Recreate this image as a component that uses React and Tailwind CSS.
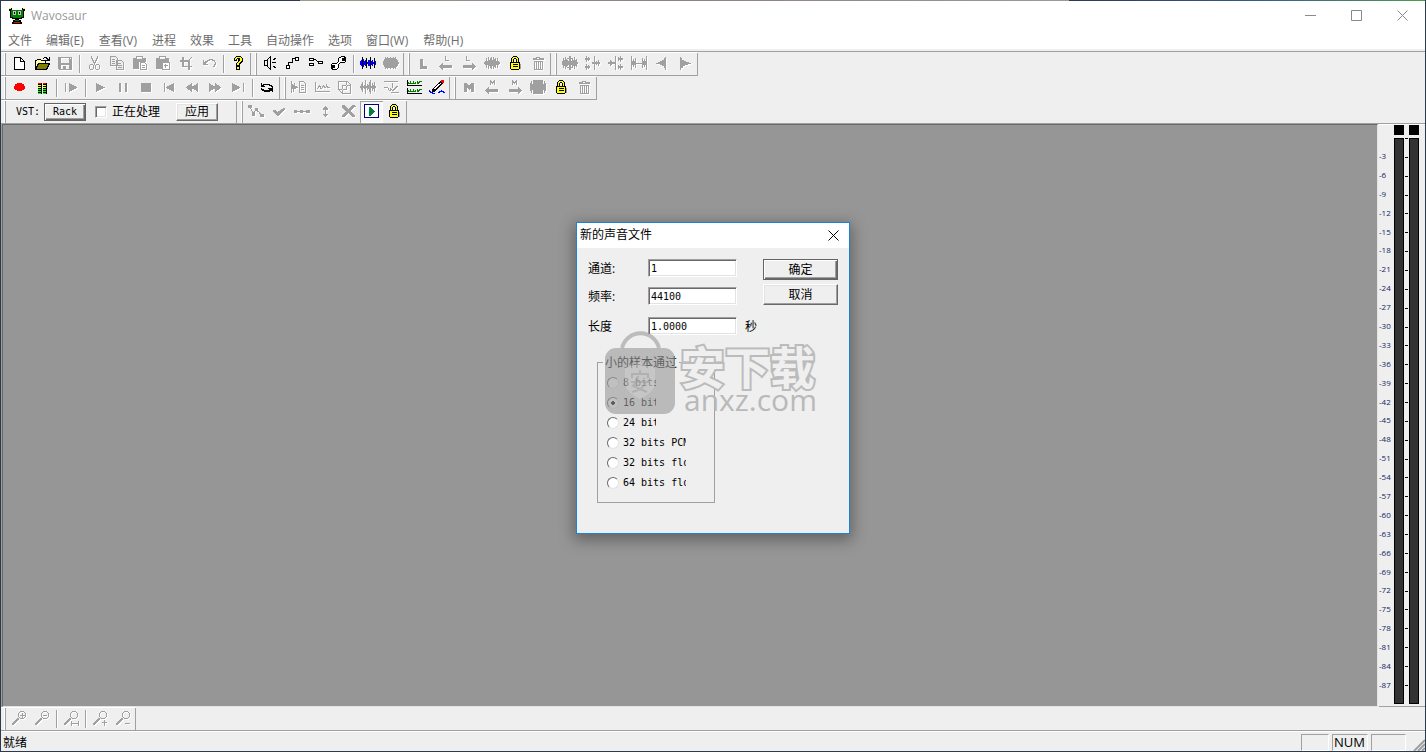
import { useState } from "react";
import clsx from "clsx";

const MENUS = ["文件", "编辑(E)", "查看(V)", "进程", "效果", "工具", "自动操作", "选项", "窗口(W)", "帮助(H)"];

const LEVELS = Array.from({ length: 29 }, (_, i) => -3 * (i + 1));

// one column per pixel, mirrored around the middle of the 16px box
const bars = (heights, from = 0, mid = 8) =>
  heights.map((h, i) => `M${from + i} ${mid - h}h1v${h * 2}h-1z`).join("");

const WAVE = [1, 2, 5, 2, 6, 3, 5, 6, 3, 6, 4, 5, 2, 5, 2, 1];
const FULL_WAVE = [2, 4, 6, 5, 6, 5, 5, 6, 5, 5, 6, 5, 6, 4, 3, 1];

const LOCK = (
  <>
    <path d="M6 1h4v1h1v1h1v4h1v7h-1v1H4v-1H3V7h1V3h1V2h1z" fill="#000" />
    <path d="M6 2h4v1h1v4h-1V4H9V3H7v1H6v3H5V3h1z" fill="#ff0" />
    <path d="M7 4h2v3H7z" fill="#efefef" />
    <path d="M4 8h8v6H4zM6 9v1h5V9zM6 11v1h5v-1z" fill="#ff0" fillRule="evenodd" />
    <path d="M13 9h1v5h-1z" fill="#a0a0a0" />
  </>
);

const TRASH = (
  <path
    d="M6 2h4v1h4v2H3V3h3zM7 3v1h2V3zM4 6h9v9H4zM5 7v7h1V7zM7 7v7h1V7zM9 7v7h1V7zM11 7v7h1V7z"
    fillRule="evenodd"
  />
);

const LENS = (
  <>
    <path d="M9.500 1.500h3l2 2v3l-2 2h-3l-2-2v-3z" fill="none" stroke="currentColor" />
    <path d="M6 8h2v2H7v1H6v1H5v1H4v1H3v1H1v-2h1v-1h1v-1h1v-1h1V9h1z" />
  </>
);

const CLIPBOARD = "M1 3h3V1h7v2h3v4H7v7H1zM5 2v2h5V2z";

const ICONS = {
  new: (
    <>
      <path d="M3.500 2.500h6l4 4v8h-10z" fill="#fff" stroke="#000" />
      <path d="M9.500 2v4.500H14" fill="none" stroke="#000" />
    </>
  ),
  open: (
    <>
      <path d="M1.500 12.5v-7h1l1-1h3l1 1h4v3" fill="#ffff9c" stroke="#000" />
      <path d="M1.500 14.500l3-6h11l-3 6z" fill="#808000" stroke="#000" />
      <path d="M9 3h1V2h3v1h1v1h1V2h1v4h-4V5h1V4h-1V3h-2v1H9z" fill="#000" />
    </>
  ),
  save: <path d="M1 2h14v13H2v-1H1zM4 3v5h8V3zM13 3v1h1V3zM4 10v4h2v-3h3v3h3v-4z" fillRule="evenodd" />,
  cut: (
    <>
      <path d="M5 1h1v2h1v2h1v2h1V5h1V3h1V1h1v3h-1v2h-1v2H9v2H8V8H7V6H6V4H5z" />
      <path d="M4.500 9.500h2l1 1v3l-1 1h-2l-1-1v-3zM10.500 9.500h2l1 1v3l-1 1h-2l-1-1v-3z" fill="none" stroke="currentColor" />
    </>
  ),
  copy: (
    <>
      <path d="M1.500 1.500h5l2 2v7h-7zM7.500 5.500h5l2 2v7h-7z" fill="#efefef" stroke="currentColor" />
      <path d="M3 4h3v1H3zM3 6h3v1H3zM3 8h3v1H3zM9 8h3v1H9zM9 10h4v1H9zM9 12h4v1H9z" />
    </>
  ),
  paste: (
    <>
      <path d={CLIPBOARD} fillRule="evenodd" />
      <path d="M8.500 7.500h4l2 2v5h-6z" fill="#fff" stroke="currentColor" />
      <path d="M10 10h3v1h-3zM10 12h3v1h-3z" />
    </>
  ),
  pasteNew: (
    <>
      <path d={CLIPBOARD} fillRule="evenodd" />
      <path d="M7.500 7.500h7v7h-7z" fill="#fff" stroke="currentColor" />
      <path d="M9 10h1V9h1v1h2v1h-2v2h-1v-2H9z" />
    </>
  ),
  crop: (
    <path
      d="M4 2h2v3h5V4h1V3h1V2h1v1h-1v1h-1v7h2v1h-2v3h-2v-3H4V7H2V5h2zM6 7v4h1v-1h1V9h1V8h1V7zM10 8H9v1H8v1H7v1h3z"
      fillRule="evenodd"
    />
  ),
  undo: <path d="M2 5h1v2h1V6h2V5h2V4h4v1h2v2h1v3h-1v2h-2v-1h1v-2h1V7h-1V6h-2V5H9v1H7v1H6v1H5v1h2v1H2z" />,
  help: (
    <>
      <path d="M4 3h1V2h1V1h5v1h1v1h1v4h-1v1h-1v1h-1v2H6V8h1V7h1V4H7v2H4zM6 11h4v4H6z" fill="#000" />
      <path d="M5 3h1V2h5v1h1v3h-1v1h-1v1H9v2H7V8h1V7h1V6h1V3H7v1H6v1H5zM7 12h2v2H7z" fill="#ff0" />
    </>
  ),
  speaker: (
    <>
      <path d="M2.500 5.500h2l4-4v13l-4-4h-2zM5.500 5v6" fill="none" stroke="currentColor" />
      <path d="M10 7h4v1h-4zM11 4h1V3h2v1h-1v1h-2zM11 11h2v1h1v1h-2v-1h-1z" />
    </>
  ),
  route: (
    <>
      <path d="M1.500 10.500h3v3h-3zM10.500 2.500h3v3h-3z" fill="#fff" stroke="currentColor" />
      <path d="M3 7h4V3h3v1H8v4H4v2H3z" />
    </>
  ),
  chain: (
    <>
      <path d="M1.500 3.500h4v2h-4zM1.500 8.500h4v2h-4zM10.500 6.500h4v2h-4z" fill="#fff" stroke="currentColor" />
      <path d="M6 4h2v1h1v1h1v1H9V6H8V5H6z" />
    </>
  ),
  wrench: (
    <>
      <path d="M10 1h4v1h1v5h-1v1H9v1H8v4H7v1H6v1H1v-1H0V9h1V8h5V7h1V3h1V2h2z" fill="#000" />
      <path d="M10 2h3v1h-2v3h3v1H9v1H8v1H7v4H6v1H2v-1h2v-3H1V9h5V8h1V7h1V3h2z" fill="#fff" />
    </>
  ),
  blueWave: (
    <>
      <path d={bars([2, 3, 1, 4, 2, 3, 4, 1, 3, 3, 4, 2, 3, 1, 3, 2])} fill="#00f" />
      <path d="M2 2h1v12H2zM6 3h1v10H6zM10 2h1v12h-1zM14 3h1v10h-1z" fill="#000" />
    </>
  ),
  fullWave: <path d={bars(FULL_WAVE)} />,
  letterL: <path d="M5 4h3v7h4v3H5z" />,
  prevL: <path d="M7 1h1v4h3v1H7zM5 8v2h9v3H5v2H4v-1H3v-1H2v-1H1v-1h1v-1h1V9h1V8z" />,
  nextL: <path d="M5 1h1v4h3v1H5zM11 8v2H2v3h9v2h1v-1h1v-1h1v-1h1v-1h-1v-1h-1V9h-1V8z" />,
  wave: <path d={bars(WAVE)} />,
  lock: LOCK,
  trash: TRASH,
  waveIn: (
    <>
      <path d={bars([2, 5, 3, 6, 4, 3, 2, 7, 7, 2, 4, 3, 6, 3, 4, 1])} />
      <path d="M5 3h6v1H5zM5 12h6v1H5z" />
    </>
  ),
  split: <path d={bars([1, 3, 1, 2, 1], 0, 4) + bars([1, 3, 1, 2, 1], 0, 12) + bars([1, 1, 7, 1, 2, 1, 3, 1], 7)} />,
  merge: <path d={bars([1, 1, 3, 2, 1, 1, 1, 7], 0) + bars([2, 1, 3, 1, 1], 10, 4) + bars([2, 1, 3, 1, 1], 10, 12)} />,
  gap: <path d={bars([7, 2, 4, 2, 5]) + bars([5, 2, 4, 2, 7], 11) + "M5 8h6v1H5z"} />,
  fadeIn: <path d="M2 8h2V7h2V6h2V5h2V3h1V2h1v13h-1v-2h-1v-2H8v-1H6V9H2z" />,
  fadeOut: <path d="M3 2h1v1h1v2h2v1h2v1h3v1h2v1h-3v1H8v1H6v2H4v2H3z" />,
  record: <path d="M6 4h5v1h2v2h1v3h-1v1h-2v1H6v-1H4v-1H3V7h1V5h2z" fill="#f00" />,
  meter: (
    <>
      <path d="M4 4h4v11H4zM9 4h4v11H9z" fill="#000" />
      <path d="M4 4h3v1H4zM9 4h3v1H9z" fill="#f00" />
      <path d="M4 6h3v1H4zM9 6h3v1H9zM4 8h3v1H4zM9 8h3v1H9z" fill="#ff0" />
      <path d="M4 10h3v1H4zM9 10h3v1H9zM4 12h3v1H4zM9 12h3v1H9zM4 14h3v1H4zM9 14h3v1H9z" fill="#0f0" />
    </>
  ),
  playFrom: <path d="M2 4h1v9H2zM6 4h1v1h2v1h2v1h2v1h1v1h-1v1h-2v1H9v1H7v1H6z" />,
  play: <path d="M4 4h1v1h2v1h2v1h2v1h2v1h-2v1H9v1H7v1H5v1H4z" />,
  pause: <path d="M4 4h2v9H4zM10 4h2v9h-2z" />,
  stop: <path d="M3 4h10v9H3z" />,
  start: <path d="M3 4h1v9H3zM13 4v9h-1v-1h-2v-1H8v-1H6V9H5V8h1V7h2V6h2V5h2V4z" />,
  rewind: <path d="M8 4v9H7v-1H6v-1H4v-1H3V9H2V8h1V7h1V6h2V5h1V4zM14 4v9h-1v-1h-1v-1h-2v-1H8V7h2V6h2V5h1V4z" />,
  forward: <path d="M2 4h1v1h1v1h2v1h2V4h1v1h1v1h2v1h1v1h1v1h-1v1h-1v1h-2v1H9v1H8v-3H6v1H4v1H3v1H2z" />,
  end: <path d="M2 4h1v1h2v1h2v1h2v1h1v1H9v1H7v1H5v1H3v1H2zM13 4h1v9h-1z" />,
  loop: <path d="M4 5h7v1h2v1h1v2h-1V8h-1V7h-2V6H5v1h1v1H2V4h1v2h1zM2 9h1v1h2v1h5v-1H9V9h5v4h-1v-1h-2v1H5v-1H3v-1H2z" />,
  insertFile: (
    <>
      <path d="M0 2h1v3h1v1h1V4h1v3h2v1h1v1H5v1H3v3H2v-3H1v4H0z" />
      <path d="M8.500 2.500h4l2 2v9h-6z" fill="none" stroke="currentColor" />
      <path d="M10 6h3v1h-3zM10 8h3v1h-3zM10 10h3v1h-3z" />
    </>
  ),
  graph: <path d="M1 3h1v9h14v1H1zM3 9h1V7h1V6h1v1h1v2h1V7h1V6h1v1h1v1h1V5h1v2h1v1h2v1h-3V8h-1v1h-2V8H9v1H8v1H6V8H5v1H4v1H3z" />,
  cube: (
    <>
      <path d="M1 2h9v9H1zM2 3v7h7V3zM5 6h9v9H5zM6 7v7h7V7z" fillRule="evenodd" />
      <path d="M10 2h1v1h1v1h1v1h1v1h-1V5h-1V4h-1V3h-1zM1 10h1v1h1v1h1v1h1v1H4v-1H3v-1H2v-1H1z" />
    </>
  ),
  slices: <path d={bars([1, 3, 5, 1, 2, 7, 1, 3, 2, 5, 7, 1, 4, 2, 5, 1])} />,
  threshold: <path d="M1 2h14v1H1zM8 13h8v1H8zM1 8h4v1h1v2h1V9h1v1h1v1h1v-1h1V9h1V8h1V7h2v1h-1v1h-1v1h-1v1h-1v1H9v-1H8v1H6v-1H5V9H1zM9 4h1v5H9z" />,
  stereo: (
    <>
      <path d="M1 1h1v6H1zM1 6h15v1H1zM1 9h1v6H1zM1 14h15v1H1z" fill="#000" />
      <path
        d="M2 3h1v2H2zM3 4h1V2h1v3H3zM5 4h2v1H5zM7 2h1v3H7zM8 4h1V3h1v2H8zM11 2h1v3h-1zM12 3h1v2h-1zM13 2h3v1h-2v1h-1zM2 11h1v2H2zM3 12h1v-2h1v3H3zM5 12h2v1H5zM7 10h1v3H7zM8 12h1v-1h1v2H8zM11 10h1v3h-1zM12 11h1v2h-1zM13 10h3v1h-2v1h-1z"
        fill="#008000"
      />
    </>
  ),
  pencil: (
    <>
      <path d="M0 11h1v1h1v1h2v1h2v1H3v-1H1v-1H0zM9 13h1v-1h2v-1h1v1h2v1h1v1h-2v-1h-3v1H9z" fill="#00f" />
      <path d="M12 1h3v3h-1v1h-1v1h-1v1h-1v1h-1v1H9v1H8v1H7v1H6v1H3v-3h1V9h1V8h1V7h1V6h1V5h1V4h1V3h1V2h1z" fill="#000" />
      <path d="M11 4h1v1h-1v1h-1v1H9v1H8v1H7v1H5V9h1V8h1V7h1V6h1V5h2z" fill="#fff" />
      <path d="M12 1h3v3h-2V3h-1z" fill="#f00" />
    </>
  ),
  letterM: <path d="M3 4h3l2 3 2-3h3v9h-3V9l-2 2-2-2v4H3z" />,
  prevM: <path d="M6 1h1v1h1v1h1V2h1V1h1v5h-1V4H9v1H8V4H7v2H6zM5 8v2h9v3H5v2H4v-1H3v-1H2v-1H1v-1h1v-1h1V9h1V8z" />,
  nextM: <path d="M5 1h1v1h1v1h1V2h1V1h1v5H9V4H8v1H7V4H6v2H5zM11 8v2H2v3h9v2h1v-1h1v-1h1v-1h1v-1h-1v-1h-1V9h-1V8z" />,
  block: <path d={bars([4, 6, 3, 7, 7, 7, 7, 7, 7, 7, 7, 7, 7, 3, 6, 4])} />,
  nodes: (
    <>
      <path d="M2 3l3 8 3-4 3 2 3 4" fill="none" stroke="currentColor" />
      <path d="M0 2h4v3H0zM4 10h3v3H4zM7 5h3v3H7zM12 11h4v3h-4z" />
    </>
  ),
  check: <path d="M2 7h3v1h1v1h1v-1h2V7h1V6h2V5h2v2h-1v1h-1v1h-1v1h-1v1H9v1H8v1H6v-1H5v-1H4v-1H3V9H2z" />,
  line: <path d="M0 7h3v1h3V7h3v1h3V7h4v3h-4V9H9v1H6V9H3v1H0z" />,
  vertical: <path d="M8 3h1v1h1v1h1v2H9v4h2v1h-1v1H9v1H8v-1H7v-1H6v-1h2V7H6V5h1V4h1z" />,
  cross: (
    <path d="M2 2h3v1h1v1h1v1h1v1h1V5h1V4h1V3h1V2h3v1h1v1h-2v1h-1v1h-1v1h-1v2h1v1h1v1h1v1h1v2h-3v-1h-1v-1h-1v-1H9v-1H8v1H7v1H6v1H5v1H2v-2h1v-1h1v-1h1v-1h1V8H5V7H4V6H3V5H2z" />
  ),
  autoplay: (
    <>
      <path d="M1 1h15v14H1z" fill="#000080" />
      <path d="M2 2h13v12H2z" fill="#fff" />
      <path d="M6 4h2v1h1v1h1v1h1v1h1v1h-1v1h-1v1H9v1H8v1H6z" fill="#008040" />
    </>
  ),
  zoomIn: <>{LENS}<path d="M11 3h1v2h2v1h-2v2h-1V6H9V5h2z" /></>,
  zoomOut: <>{LENS}<path d="M9 5h4v1H9z" /></>,
  zoomFit: <>{LENS}<path d="M8 11h1v2h6v-2h1v5h-1v-2H9v2H8z" /></>,
  zoomInV: <>{LENS}<path d="M12 10h1v2h2v1h-2v3h-1v-3h-2v-1h2z" /></>,
  zoomOutV: <>{LENS}<path d="M10 13h5v1h-5z" /></>,
};

const COLOURED = ["new", "open", "help", "speaker", "route", "chain", "wrench", "blueWave", "lock", "record", "meter", "loop", "stereo", "pencil", "autoplay"];

const ROW_ONE = [
  ["new", "open", "save", "|", "cut", "copy", "paste", "pasteNew", "crop", "undo", "|", "help"],
  ["speaker", "route", "chain", "wrench", "|", "blueWave", "fullWave"],
  ["letterL", "prevL", "nextL", "wave", "lock", "trash"],
  ["waveIn", "split", "merge", "gap", "fadeIn", "fadeOut"],
];

const ROW_TWO = [
  ["record", "meter", "|", "playFrom", "|", "play", "pause", "stop", "start", "rewind", "forward", "end", "|", "loop"],
  ["insertFile", "graph", "cube", "slices", "threshold", "stereo", "pencil"],
  ["letterM", "prevM", "nextM", "block", "lock", "trash"],
];

const ENVELOPE = ["nodes", "check", "line", "vertical", "cross", "autoplay", "lock"];
const ZOOM = ["zoomIn", "zoomOut", "|", "zoomFit", "|", "zoomInV", "zoomOutV"];

const RAISED =
  "border border-t-white border-l-white border-r-[#696969] border-b-[#696969] bg-[#efefef] shadow-[inset_-1px_-1px_0_#a0a0a0,inset_1px_1px_0_#e3e3e3]";
const DEFAULT_RAISED =
  "border border-[#646464] bg-[#efefef] shadow-[inset_1px_1px_0_#fff,inset_-1px_-1px_0_#696969,inset_-2px_-2px_0_#a0a0a0]";
const SUNKEN =
  "border border-t-[#a0a0a0] border-l-[#a0a0a0] border-r-white border-b-white bg-white shadow-[inset_1px_1px_0_#696969,inset_-1px_-1px_0_#e3e3e3]";
const PANE = "h-[17px] border border-t-[#a0a0a0] border-r-white border-b-white border-l-[#a0a0a0]";
const MONO = "font-['DejaVu_Sans_Mono',monospace] text-[10px]";

function ToolButton({ name }) {
  const coloured = COLOURED.includes(name);
  return (
    <button
      type="button"
      aria-label={name}
      className={clsx(
        "flex h-[22px] w-[23px] pt-0.5 pl-[3px]",
        coloured ? "text-black" : "text-[#a0a0a0] drop-shadow-[1px_1px_0_#fff]",
        name === "autoplay" && "bg-[#f7f7f7] shadow-[inset_1px_1px_0_#a0a0a0,inset_-1px_-1px_0_#fff]"
      )}
    >
      <svg viewBox="0 0 16 16" className="size-4 shrink-0" fill="currentColor" shapeRendering="crispEdges">
        {ICONS[name]}
      </svg>
    </button>
  );
}

function Band({ items, children }) {
  return (
    <div className="group flex h-6 border-t border-b border-t-white border-b-[#a0a0a0]">
      <div className="flex w-2 justify-end pr-0.5 group-first:w-[7px]">
        <div className="w-0.5 border-r border-l border-r-[#a0a0a0] border-l-white" />
      </div>
      {items?.map((name, i) =>
        name === "|" ? (
          <div key={i} className="flex w-1.5 justify-center">
            <div className="my-0.5 w-0.5 border-r border-l border-r-white border-l-[#a0a0a0]" />
          </div>
        ) : (
          <ToolButton key={i} name={name} />
        )
      )}
      {children}
      <div className="w-px bg-[#a0a0a0]" />
    </div>
  );
}

function TitleBar() {
  return (
    <header className="flex h-[30px] items-center bg-white pb-px">
      <svg viewBox="0 0 16 16" className="ml-2 size-4" shapeRendering="crispEdges">
        <path d="M0 0h3v2h10V0h3v3h-1v7h-2v1h-3v1h2v2h1v2H3v-2h1v-2h2v-1H3v-1H1V3H0z" fill="#000" />
        <path d="M2 2h12v7h-2v1H4V9H2zM6 12h4v1H6z" fill="#008000" />
        <path d="M0 0h2v1H0zM14 0h2v1h-2z" fill="#ff0" />
        <path d="M4 3h3v4H4zM9 3h3v4H9z" fill="#c0c0c0" />
        <path d="M5 4h1v2H5zM10 4h1v2h-1z" fill="#000" />
        <path d="M5 14h6v1H5z" fill="#f00" />
      </svg>
      <h1 className="ml-1.5 text-xs text-[#999]">Wavosaur</h1>
      <div className="ml-auto flex h-full text-[#8a8a8a]">
        <button type="button" aria-label="最小化" className="flex w-[46px] items-center justify-center">
          <svg viewBox="0 0 11 11" className="size-[11px]" stroke="currentColor">
            <path d="M0 5.500h11" />
          </svg>
        </button>
        <button type="button" aria-label="最大化" className="flex w-[46px] items-center justify-center">
          <svg viewBox="0 0 11 11" className="size-[11px]" fill="none" stroke="currentColor">
            <path d="M.5.500h10v10H.5z" />
          </svg>
        </button>
        <button type="button" aria-label="关闭" className="flex w-[46px] items-center justify-center">
          <svg viewBox="0 0 11 11" className="size-[11px]" stroke="currentColor">
            <path d="M.5.500l10 10M10.500.500l-10 10" />
          </svg>
        </button>
      </div>
    </header>
  );
}

function LevelMeter() {
  const track = <div className="h-full border border-black bg-[#333]" />;
  return (
    <aside className="flex w-[46px] flex-col border-t border-b border-t-white border-b-[#a0a0a0] bg-[#efefef] pr-1.5">
      <div className="flex justify-end gap-[5px]">
        <div className="h-2.5 w-2.5 bg-black" />
        <div className="h-2.5 w-2.5 bg-black" />
      </div>
      <div className="mt-[3px] mb-0.5 grid min-h-0 flex-1 grid-cols-[1fr_10px_5px_10px]">
        <ul className="-mt-px flex flex-col justify-between pt-3.5 pb-3.5 text-[8px] leading-[10px] text-[#14245c]">
          {LEVELS.map((db) => (
            <li key={db}>{db}</li>
          ))}
        </ul>
        {track}
        <div className="flex flex-col justify-between pb-[18px]">
          <span className="mx-px h-px bg-black" />
          {LEVELS.map((db) => (
            <span key={db} className="mx-px h-px bg-black" />
          ))}
        </div>
        {track}
      </div>
    </aside>
  );
}

function Field({ id, label, value, unit }) {
  return (
    <div className="flex h-[18px] items-center">
      <label htmlFor={id} className="w-[60px] pt-0.5">{label}</label>
      <input id={id} defaultValue={value} className={clsx("h-[18px] w-[89px] shrink-0 px-0.5 pt-0.5 outline-none", MONO, SUNKEN)} />
      {unit && <span className="ml-2 pt-0.5">{unit}</span>}
    </div>
  );
}

const DEPTHS = [
  { label: "8 bits", short: true },
  { label: "16 bits", short: true },
  { label: "24 bits", short: true },
  { label: "32 bits PCM" },
  { label: "32 bits float" },
  { label: "64 bits float" },
];

function Watermark() {
  return (
    <div className="pointer-events-none absolute top-[111px] left-[27px] flex items-end" aria-hidden="true">
      <svg viewBox="0 0 72 80" className="h-20 w-[72px] overflow-visible">
        <path d="M18 14a19 19 0 0 1 37 0" fill="none" stroke="#999" strokeOpacity=".6" strokeWidth="4" />
        <rect x="1" y="14" width="70" height="66" rx="11" fill="#9a9a9a" fillOpacity=".62" />
        <path d="M21 33q8 0 15-5 7 5 15 5v15q0 10-15 17-15-7-15-17z" fill="#ddd" fillOpacity=".35" />
        <path d="M36 36v4M28 44v-4h16v4M27 48h18M34 42q-1 6-5 10l14 6M42 48q-3 8-14 10" fill="none" stroke="#999" strokeOpacity=".5" strokeWidth="2" />
      </svg>
      <div className="ml-1 flex flex-col text-[#b9b9b9]">
        <span className="font-['Noto_Sans_CJK_SC',sans-serif] text-[45px] leading-[40px] font-bold text-[#efefef] [paint-order:stroke] [stroke-linejoin:round] [-webkit-text-stroke:4px_#bbb]">
          安下载
        </span>
        <span className="ml-1 text-[30px] leading-7 font-medium">anxz.com</span>
      </div>
    </div>
  );
}

function NewSoundDialog() {
  const [depth, setDepth] = useState("16 bits");
  return (
    <section
      role="dialog"
      aria-labelledby="dialog-title"
      className="relative h-[312px] w-[274px] border border-[#1883d7] bg-[#efefef] text-xs text-black shadow-[0_4px_14px_2px_rgba(0,0,0,0.35)]"
    >
      <header className="flex h-[25px] items-center justify-between bg-white pr-2.5 pl-[3px]">
        <h2 id="dialog-title" className="pb-px">新的声音文件</h2>
        <button type="button" aria-label="关闭">
          <svg viewBox="0 0 11 11" className="size-[11px]" stroke="#000">
            <path d="M.5.500l10 10M10.500.500l-10 10" />
          </svg>
        </button>
      </header>
      <div className="flex pt-[11px] pr-[11px] pl-[11px]">
        <div className="flex w-[175px] flex-col">
          <Field id="channels" label="通道:" value="1" />
          <div className="h-2.5" />
          <Field id="rate" label="频率:" value="44100" />
          <div className="h-3" />
          <Field id="length" label="长度" value="1.0000" unit="秒" />
        </div>
        <div className="flex flex-1 flex-col gap-1">
          <button type="button" className={clsx("h-[21px] pt-px", DEFAULT_RAISED)}>确定</button>
          <button type="button" className={clsx("h-[21px] pt-px", RAISED)}>取消</button>
        </div>
      </div>
      <fieldset className="mt-5 ml-5 h-[148px] w-[118px] border border-[#a0a0a0] px-[9px]">
        <legend className="-ml-1 px-0.5 leading-4">小的样本通过</legend>
        <div className="mt-0.5 flex flex-col">
          {DEPTHS.map(({ label, short }) => (
            <label key={label} className={clsx("flex h-5 items-center", MONO)}>
              <input
                type="radio"
                name="depth"
                checked={depth === label}
                onChange={() => setDepth(label)}
                className="mr-1 size-3 shrink-0 appearance-none rounded-full border border-t-[#696969] border-r-[#e3e3e3] border-b-[#e3e3e3] border-l-[#696969] bg-white checked:bg-[radial-gradient(circle,#000_2px,#fff_2px)]"
              />
              <span className={clsx("overflow-hidden pt-px whitespace-nowrap", short ? "w-[33px]" : "w-[63px]")}>{label}</span>
            </label>
          ))}
        </div>
      </fieldset>
      <Watermark />
    </section>
  );
}

export default function App() {
  return (
    <div className="relative flex h-screen flex-col overflow-hidden border-r border-b border-l border-[#2b3a4f] bg-[#efefef] font-['Open_Sans','Noto_Sans_CJK_SC',sans-serif]">
      <div className="flex h-px shrink-0">
        <div className="w-[21%] bg-[#2b3a4f]" />
        <div className="flex-1 bg-linear-to-r from-[#a09a8c] via-[#8d7f86] to-[#9a9a9a]" />
        <div className="w-1/4 bg-linear-to-r from-[#2b3a4f] via-[#35588a] to-[#4f9a4a]" />
      </div>
      <TitleBar />
      <nav className="flex h-[18px] bg-white">
        {MENUS.map((m) => (
          <button
            key={m}
            type="button"
            className={clsx("pt-px text-xs leading-[18px] whitespace-nowrap text-[#6d6d6d]", m.includes("(") ? "pr-2 pl-[7px]" : "px-[7px]")}
          >
            {m}
          </button>
        ))}
      </nav>

      <div className="mt-0.5 border-t border-[#a0a0a0]">
        <div className="flex">
          {ROW_ONE.map((items, i) => <Band key={i} items={items} />)}
        </div>
        <div className="flex">
          {ROW_TWO.map((items, i) => <Band key={i} items={items} />)}
        </div>
        <div className="-mb-px flex">
          <Band>
            <div className="flex w-[228px] items-center pl-2 text-xs">
              <span className={clsx("w-7", MONO)}>VST:</span>
              <button type="button" className={clsx("h-[18px] w-[42px]", MONO, DEFAULT_RAISED)}>
                Rack
              </button>
              <input id="processing" type="checkbox" className={clsx("ml-[9px] size-3 appearance-none", SUNKEN)} />
              <label htmlFor="processing" className="ml-[5px]">正在处理</label>
              <button type="button" className={clsx("ml-4 h-[18px] w-[42px] leading-none", RAISED)}>应用</button>
            </div>
          </Band>
          <Band items={ENVELOPE} />
        </div>
      </div>

      <main className="flex min-h-0 flex-1 border-t border-l border-[#a0a0a0]">
        <div className="mr-px flex-1 border border-t-[#696969] border-r-[#e3e3e3] border-b-[#e3e3e3] border-l-[#696969] bg-[#969696]" />
        <LevelMeter />
      </main>

      <div className="flex border-b border-[#a0a0a0]">
        <div className="-mb-px flex">
          <Band items={ZOOM} />
        </div>
      </div>

      <footer className="flex h-5 items-center border-t border-white pl-0.5 text-xs text-black">
        <span className="pt-0.5">就绪</span>
        <div className="ml-auto flex h-full items-end gap-[3px] text-[13px] leading-[14px]">
          <div className={clsx("w-7", PANE)} />
          <div className={clsx("w-9 pl-px", PANE)}>NUM</div>
          <div className={clsx("w-[35px]", PANE)} />
          <svg viewBox="0 0 12 12" className="ml-1 size-3" stroke="#a0a0a0" strokeWidth="2">
            <path d="M1 12L12 1M5 12l7-7M9 12l3-3" />
          </svg>
        </div>
      </footer>

      <div className="absolute inset-0 grid place-items-center pt-1">
        <NewSoundDialog />
      </div>
    </div>
  );
}
